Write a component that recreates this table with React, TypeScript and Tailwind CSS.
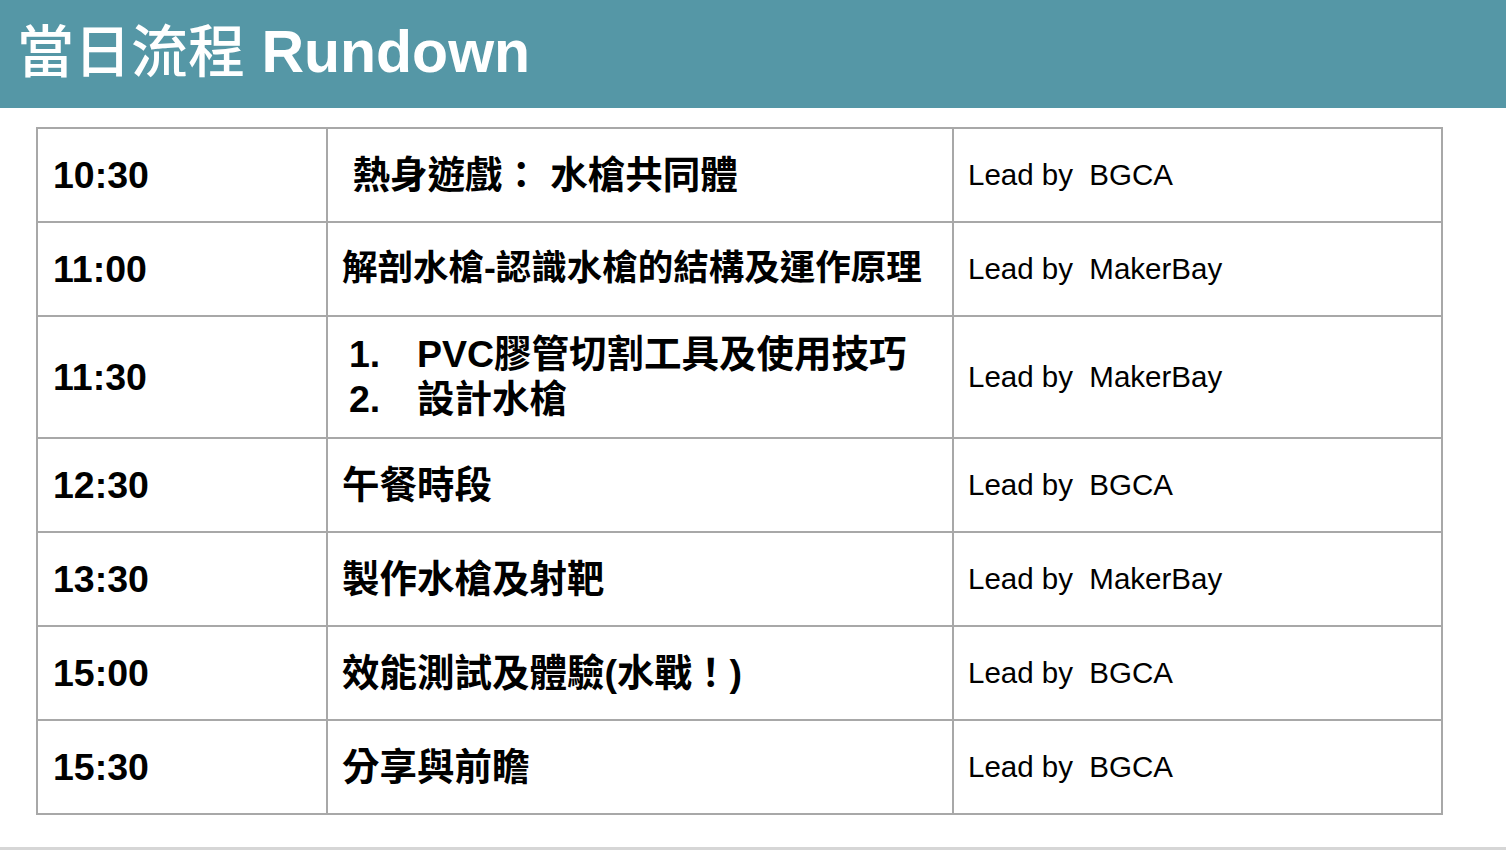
const font = "font-['Liberation_Sans','Noto_Sans_CJK_TC',sans-serif]";

type Row = { time: string; body: React.ReactNode; lead: string; tall?: boolean; small?: boolean };

const rows: Row[] = [
  { time: '10:30', body: ' 熱身遊戲： 水槍共同體', lead: 'BGCA' },
  { time: '11:00', body: '解剖水槍-認識水槍的結構及運作原理', lead: 'MakerBay', small: true },
  {
    time: '11:30',
    body: (
      <div className="flex flex-col leading-[45px]">
        <div className="flex">
          <span className="w-[75px] pl-[7px]">1.</span>
          <span>PVC膠管切割工具及使用技巧</span>
        </div>
        <div className="flex">
          <span className="w-[75px] pl-[7px]">2.</span>
          <span>設計水槍</span>
        </div>
      </div>
    ),
    lead: 'MakerBay',
    tall: true,
  },
  { time: '12:30', body: '午餐時段', lead: 'BGCA' },
  { time: '13:30', body: '製作水槍及射靶', lead: 'MakerBay' },
  { time: '15:00', body: '效能測試及體驗(水戰！)', lead: 'BGCA' },
  { time: '15:30', body: '分享與前瞻', lead: 'BGCA' },
];

export default function App() {
  return (
    <div className={`w-[1506px] h-[850px] bg-white overflow-hidden flex flex-col ${font}`}>
      <div className="h-[108px] bg-[#5597a6] flex items-center px-[17px] pb-[4px]">
        <h1 className="text-white text-[59px] font-bold leading-none whitespace-pre">
          <span className="font-medium text-[57px]">當日流程</span> Rundown
        </h1>
      </div>

      <div className="mt-[19px] ml-[36px] w-[1407px] border-2 border-[#a8a8a8] flex flex-col">
        {rows.map((r, i) => (
          <div
            key={r.time}
            className={`flex ${r.tall ? 'h-[120px]' : 'h-[92px]'} ${i > 0 ? 'border-t-2 border-[#a8a8a8] box-content' : ''}`}
          >
            <div className="w-[288px] flex items-center pl-[15px] text-[37.5px] font-bold text-black">
              {r.time}
            </div>
            <div
              className={`w-[626px] border-l-2 border-[#a8a8a8] flex items-center pl-[14px] font-bold text-black whitespace-pre ${r.small ? 'text-[35.5px]' : 'text-[37.5px]'}`}
            >
              {r.body}
            </div>
            <div className="flex-1 border-l-2 border-[#a8a8a8] flex items-center pl-[14px] text-[29.5px] text-black whitespace-pre">
              {`Lead by  ${r.lead}`}
            </div>
          </div>
        ))}
      </div>

      <div className="mt-auto h-[3px] bg-[#d6d6d6]" />
    </div>
  );
}
